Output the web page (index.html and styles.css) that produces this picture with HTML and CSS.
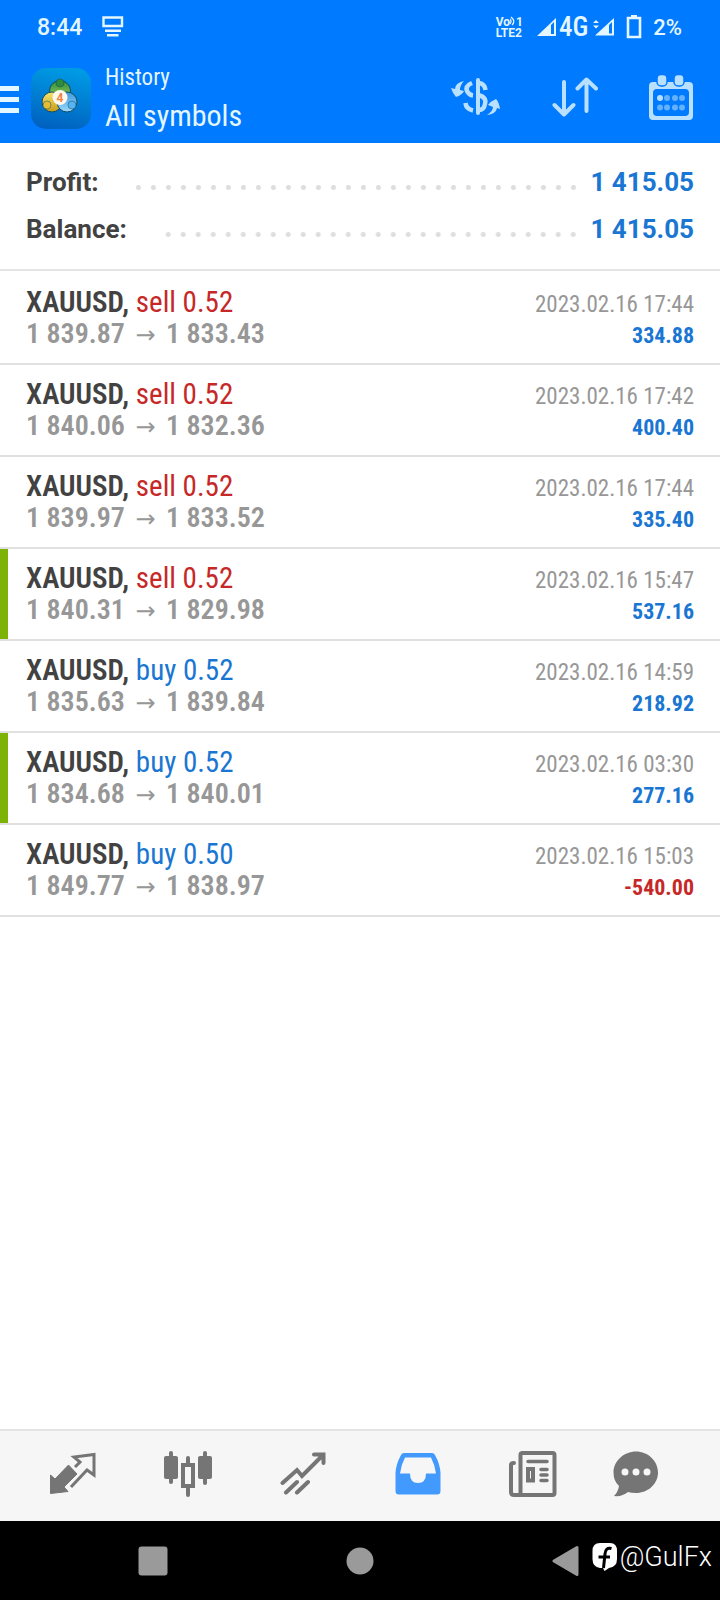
FILE: index.html
```html
<!DOCTYPE html>
<html lang="en">
<head>
<meta charset="utf-8">
<meta name="viewport" content="width=device-width, initial-scale=1">
<title>History</title>
<link rel="stylesheet" href="styles.css">
</head>
<body>
<header class="top">
  <div class="status">
    <span class="clock">8:44</span>
    <svg class="notice" width="22" height="22" viewBox="0 0 22 22" fill="none" stroke="#e4f6ff" stroke-width="2.400"><path d="M1.500 1.500H20V10H1.500zM3 14.800H19M5 19.300H16.500"/></svg>
    <span class="volte"><span>Vo<svg width="6" height="10" viewBox="0 0 6 10" fill="none" stroke="#e4f6ff" stroke-width="1.300"><path d="M0 3Q2 5 0 8M1 1Q6 5 2 9"/></svg>1</span><span>LTE2</span></span>
    <svg width="20" height="20" viewBox="0 0 20 20"><path d="M0 19L19 1V19z" fill="#e4f6ff"/><path d="M14 8L17 5V17H14z" fill="#007aff"/></svg>
    <span class="net">4G</span>
    <svg class="sim" width="22" height="20" viewBox="0 0 22 20"><path d="M2 18.500L21 1V18.500z" fill="#e4f6ff"/><path d="M16 8L19 5V16.500H16z" fill="#007aff"/><path d="M0 6L3 3L6 6zM0 8.500H6L3 11.500z" fill="#e4f6ff"/></svg>
    <svg class="battery" width="16" height="26" viewBox="0 0 16 26" fill="none"><path d="M2 4H14V23H2z" stroke="#e4f6ff" stroke-width="2.600"/><path d="M5 1H11V4H5z" fill="#e4f6ff"/></svg>
    <span class="level">2%</span>
  </div>
  <div class="bar">
    <button class="plain menu" aria-label="Menu"><svg width="19" height="28" viewBox="0 0 19 28"><path d="M0 0H19V5H0zM0 11H19V16H0zM0 22H19V27H0z" fill="#e4f6ff"/></svg></button>
    <svg class="logo" width="60" height="61" viewBox="0 0 60 61">
      <defs>
        <linearGradient id="sky" x1="0.600" y1="0" x2="0.400" y2="1"><stop offset="0" stop-color="#009be4"/><stop offset="1" stop-color="#0062c0"/></linearGradient>
        <linearGradient id="green" x1="0" y1="0" x2="0" y2="1"><stop offset="0" stop-color="#2d8b3a"/><stop offset="1" stop-color="#a9d860"/></linearGradient>
        <linearGradient id="gold" x1="0" y1="0" x2="0" y2="1"><stop offset="0" stop-color="#f4e56d"/><stop offset="1" stop-color="#c99a18"/></linearGradient>
        <linearGradient id="blue" x1="0" y1="0" x2="0" y2="1"><stop offset="0" stop-color="#3c9be0"/><stop offset="1" stop-color="#9bd8fa"/></linearGradient>
      </defs>
      <rect width="60" height="61" rx="15" fill="url(#sky)"/>
      <g stroke="#174d63" stroke-width="1">
        <circle cx="29" cy="23" r="10.500" fill="url(#green)"/>
        <circle cx="21" cy="34" r="10" fill="url(#gold)"/>
        <circle cx="36" cy="34" r="10" fill="url(#blue)"/>
      </g>
      <g stroke="#174d63" stroke-width="0.500">
        <circle cx="29" cy="15" r="4" fill="#2f8c3c"/>
        <circle cx="16" cy="37" r="4" fill="#e4bd35"/>
        <circle cx="41" cy="37" r="4" fill="#55b4f2"/>
      </g>
      <circle cx="29" cy="29.500" r="7.500" fill="#fff8ee"/>
      <text class="logo-digit" x="29" y="34" text-anchor="middle">4</text>
    </svg>
    <div class="titles"><h1>History</h1><p>All symbols</p></div>
    <div class="tools">
      <button class="plain" aria-label="Currency"><svg width="50" height="40" viewBox="0 0 50 40" fill="none" stroke="#b9e0ff"><path d="M27 3V36" stroke-width="4" stroke-linecap="round"/><path d="M34.500 13Q34 7 28 6M27 18Q36 20 34 27Q33 33 28 33" stroke-width="4.500"/><path d="M21 6Q14 9 16 14Q18 18 22 18.500M14.500 26Q15 32 22 33.500" stroke-width="4.500"/><path d="M13 4Q4 6 4 12L0 11Q2 17 5 20Q11 18 13 14L9 13Q9 8 13 4zM36 38Q42 34 42 30L37 28Q40 24 45 22Q48 25 49 32L46 31Q45 37 36 38z" fill="#b9e0ff" stroke="none"/></svg></button>
      <button class="plain" aria-label="Sort"><svg width="46" height="40" viewBox="0 0 46 40" fill="none" stroke="#b9e0ff" stroke-width="4" stroke-linecap="round" stroke-linejoin="round"><path d="M12 5V37M2.500 28L12 37.500L21.500 28M34.500 34V3M25.500 11.500L34.500 2.500L44 11.500"/></svg></button>
      <button class="plain" aria-label="Calendar"><svg width="44" height="45" viewBox="0 0 44 45"><rect x="0" y="7" width="44" height="38" rx="4" fill="#b9e0ff"/><g fill="#b9e0ff" stroke="#007aff" stroke-width="1.500"><rect x="8" y="-0.500" width="10" height="11.500" rx="4"/><rect x="25" y="-0.500" width="10" height="11.500" rx="4"/></g><rect x="4" y="14" width="36" height="27" rx="4" fill="#007aff"/><g fill="#63b1ff"><circle cx="11" cy="23" r="3" fill="#b9e0ff"/><circle cx="18" cy="23" r="3"/><circle cx="26" cy="23" r="3"/><circle cx="33" cy="23" r="3"/><circle cx="11" cy="32.500" r="3"/><circle cx="18" cy="32.500" r="3"/><circle cx="26" cy="32.500" r="3"/><circle cx="33" cy="32.500" r="3"/></g></svg></button>
    </div>
  </div>
</header>
<main>
  <dl class="summary">
    <div><dt>Profit:</dt><dd>1 415.05</dd></div>
    <div><dt>Balance:</dt><dd>1 415.05</dd></div>
  </dl>
  <ul class="deals">
    <li><p class="deal"><b>XAUUSD,</b> <span class="sell">sell 0.52</span></p><time>2023.02.16 17:44</time><p class="price">1 839.87 <i>→</i> 1 833.43</p><p class="result">334.88</p></li>
    <li><p class="deal"><b>XAUUSD,</b> <span class="sell">sell 0.52</span></p><time>2023.02.16 17:42</time><p class="price">1 840.06 <i>→</i> 1 832.36</p><p class="result">400.40</p></li>
    <li><p class="deal"><b>XAUUSD,</b> <span class="sell">sell 0.52</span></p><time>2023.02.16 17:44</time><p class="price">1 839.97 <i>→</i> 1 833.52</p><p class="result">335.40</p></li>
    <li class="marked"><p class="deal"><b>XAUUSD,</b> <span class="sell">sell 0.52</span></p><time>2023.02.16 15:47</time><p class="price">1 840.31 <i>→</i> 1 829.98</p><p class="result">537.16</p></li>
    <li><p class="deal"><b>XAUUSD,</b> <span class="buy">buy 0.52</span></p><time>2023.02.16 14:59</time><p class="price">1 835.63 <i>→</i> 1 839.84</p><p class="result">218.92</p></li>
    <li class="marked"><p class="deal"><b>XAUUSD,</b> <span class="buy">buy 0.52</span></p><time>2023.02.16 03:30</time><p class="price">1 834.68 <i>→</i> 1 840.01</p><p class="result">277.16</p></li>
    <li><p class="deal"><b>XAUUSD,</b> <span class="buy">buy 0.50</span></p><time>2023.02.16 15:03</time><p class="price">1 849.77 <i>→</i> 1 838.97</p><p class="result loss">-540.00</p></li>
  </ul>
</main>
<nav class="tabs">
  <button class="plain" aria-label="Quotes"><svg width="46" height="46" viewBox="0 0 46 46"><path d="M0.500 24L5 28L18.500 14L27 23L14 36L18 40.500L0.500 42.500z" fill="#757575" stroke="#757575" stroke-linejoin="round"/><path d="M25 16L30 11L24 6L44 3.500V24L37 19L21 36" fill="none" stroke="#757575" stroke-width="3"/></svg></button>
  <button class="plain" aria-label="Charts"><svg width="48" height="46" viewBox="0 0 48 46" fill="#757575"><rect x="0" y="5" width="14" height="23" rx="2"/><rect x="5" y="0" width="4" height="33" rx="2"/><rect x="34" y="5" width="14" height="23" rx="2"/><rect x="39" y="0" width="4" height="34" rx="2"/><rect x="22" y="5" width="4" height="9" rx="2"/><rect x="22" y="35" width="4" height="11" rx="2"/><rect x="19" y="14" width="10" height="21" fill="none" stroke="#757575" stroke-width="4"/></svg></button>
  <button class="plain" aria-label="Trade"><svg width="46" height="46" viewBox="0 0 46 46" fill="none" stroke="#757575" stroke-width="4" stroke-linecap="round"><path d="M2.500 32L17 19L22 25L43 4M34 3.500H43.500V12M6 41.500L17 31M17 41.500L28 31"/></svg></button>
  <button class="plain" aria-label="History"><svg width="46" height="46" viewBox="0 0 46 46"><path d="M9 2H37Q39 2 40 4Q45 13 45.500 22V40Q45.500 43.500 42 43.500H4Q0.500 43.500 0.500 40V22Q1 13 6 4Q7 2 9 2z" fill="#429aff"/><path d="M10 6.500H36Q40 14 41 22.500H31Q31 32 23 32Q15 32 15 22.500H5Q6 14 10 6.500z" fill="#f6f6f6"/></svg></button>
  <button class="plain" aria-label="News"><svg width="48" height="46" viewBox="0 0 48 46" fill="none" stroke="#757575" stroke-width="4" stroke-linecap="round"><rect x="11.500" y="2" width="34" height="42" rx="2"/><path d="M11.500 44H5Q2 44 2 41V14Q2 12 5 12"/><path d="M19 10.500H38M32 18.500H38M32 24H38M32 29.500H38" stroke-width="3.500"/><path d="M19 18H24V29.500H19z"/></svg></button>
  <button class="plain" aria-label="Messages"><svg width="46" height="46" viewBox="0 0 46 46"><path d="M23 0.500C35 0.500 45 10 45 21.500S35 42 23 42Q18 42 15 41Q9 46 1 45Q5 41 6 35Q0.500 30 0.500 21.500C0.500 10 11 0.500 23 0.500z" fill="#757575"/><g fill="#f6f6f6"><circle cx="12" cy="21" r="3.500"/><circle cx="23" cy="21" r="3.500"/><circle cx="34" cy="21" r="3.500"/></g></svg></button>
</nav>
<footer class="system">
  <button class="plain" aria-label="Recent apps"><svg width="30" height="30" viewBox="0 0 30 30"><rect x="0.500" y="0.500" width="29" height="29" rx="3" fill="#9a9a9a"/></svg></button>
  <button class="plain" aria-label="Home"><svg width="28" height="28" viewBox="0 0 28 28"><circle cx="14" cy="14" r="13.500" fill="#9a9a9a"/></svg></button>
  <button class="plain" aria-label="Back"><svg width="28" height="32" viewBox="0 0 28 32"><path d="M25 2.500V29.500L2 16z" fill="#9a9a9a" stroke="#9a9a9a" stroke-width="3" stroke-linejoin="round"/></svg></button>
  <p class="handle"><svg width="26" height="28" viewBox="0 0 26 28"><path d="M8 0H18Q25 0 25 8V16Q25 24 17 25L12.500 28L11 25H8Q0.500 24 0.500 16V8Q0.500 0 8 0z" fill="#fff"/><path d="M19.500 5.500Q13.500 4 13 11L11.500 25M6.500 14H18" fill="none" stroke="#000" stroke-width="3"/></svg><span>@GulFx</span></p>
</footer>
</body>
</html>
```
FILE: styles.css
```css
* { box-sizing: border-box; }
body {
  margin: 0;
  min-height: 100vh;
  display: flex;
  flex-direction: column;
  background: #fff;
  color: #424242;
  font-family: "Roboto Condensed", "Liberation Sans Narrow", Roboto, sans-serif;
}
h1, p, dl, dd, ul { margin: 0; padding: 0; font-weight: 400; }
svg { display: block; flex: none; }
.plain { border: 0; padding: 0; background: none; display: block; }

.top { background: #007aff; color: #e4f6ff; padding-bottom: 1px; }
.status {
  display: flex;
  align-items: center;
  height: 54px;
  padding: 0 38px 0 37px;
  font-family: Roboto, sans-serif;
}
.clock { font-size: 23px; font-weight: 500; }
.notice { margin-left: 20px; }
.volte {
  display: flex;
  flex-direction: column;
  margin: 0 14px 0 auto;
  font-size: 12px;
  line-height: 11px;
  font-weight: 700;
}
.volte svg { display: inline-block; }
.net { font: 500 27px/30px "Roboto Condensed", "Liberation Sans Narrow", Roboto, sans-serif; margin: 0 5px 0 2px; }
.battery { margin: 0 11px; }
.level { font-size: 22px; font-weight: 500; }

.bar { display: flex; align-items: center; height: 88px; padding-right: 27px; }
.menu { padding-top: 4px; }
.logo { margin-left: 12px; }
.logo-digit { font: 700 12px Roboto, sans-serif; fill: #f0843c; }
.titles { margin-left: 14px; padding-top: 2px; }
.titles h1 { font-size: 23px; line-height: 34px; }
.titles p { font-size: 30px; line-height: 42px; }
.tools { display: flex; align-items: center; gap: 51px; margin-left: auto; padding-bottom: 2px; }

.summary { padding: 16px 26px; border-bottom: 2px solid #e5e5e5; font: 700 26px/47px Roboto, sans-serif; }
.summary div { display: flex; }
.summary dt { font-weight: 700; }
.summary dd { order: 2; color: #1976d2; font-weight: 700; }
.summary div::after {
  content: "";
  order: 1;
  flex: 1;
  margin: 10px 10px 0 30px;
  background: radial-gradient(circle, #dedede 2px, transparent 3px) right center / 15px 15px repeat-x;
}

.deals { list-style: none; padding-top: 2px; }
.deals li {
  display: grid;
  grid-template-columns: 1fr auto;
  grid-template-rows: 32px 32px;
  align-items: baseline;
  padding: 13px 26px;
  border-bottom: 2px solid #e0e0e0;
  line-height: 32px;
}
.deals .marked { box-shadow: inset 8px 0 #7cb305; }
.deal { font-size: 29px; }
.deal b { font-weight: 600; }
.price { font-size: 28px; font-weight: 600; color: #979797; }
.price i { font: 400 24px/24px "DejaVu Sans", sans-serif; margin: 0 4px; }
.deals time { font-size: 23px; color: #979797; text-align: right; }
.result { font-size: 22px; font-weight: 700; color: #1976d2; text-align: right; }
.sell, .loss { color: #c62828; }
.buy { color: #1976d2; }

.tabs {
  display: grid;
  grid-template-columns: repeat(5, 5fr) 4fr;
  justify-items: center;
  margin-top: auto;
  padding: 20px 38px 24px 15px;
  background: #f6f6f6;
  border-top: 2px solid #e4e4e4;
}
.system {
  display: flex;
  align-items: center;
  height: 79px;
  padding: 0 8px 0 138px;
  background: #000;
}
.system button:nth-child(2) { margin-left: 178px; }
.system button:nth-child(3) { margin-left: 178px; }
.handle { display: flex; align-items: center; margin-left: auto; padding-bottom: 8px; gap: 2px; font: 300 27px/34px Roboto, sans-serif; color: #fff; }
```
